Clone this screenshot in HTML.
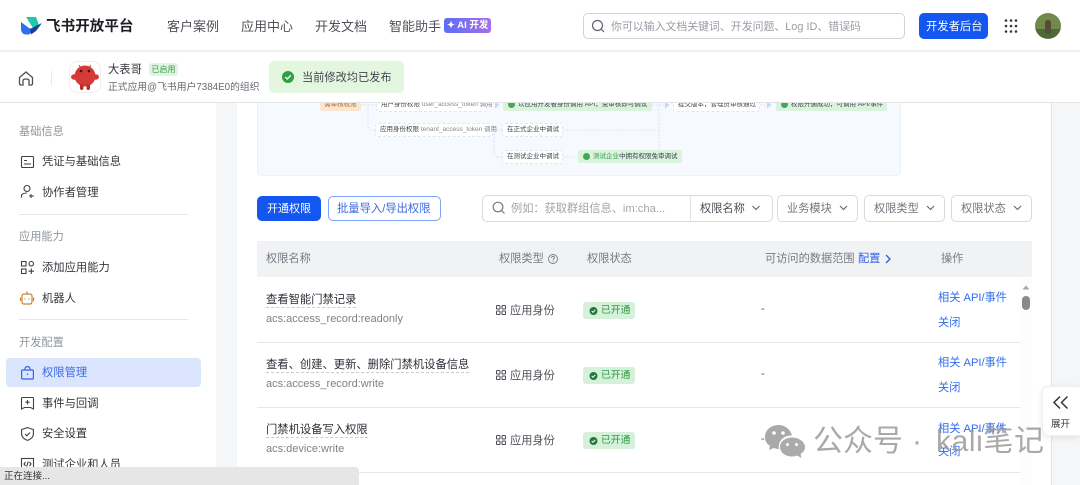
<!DOCTYPE html>
<html lang="zh"><head><meta charset="utf-8"><title>飞书开放平台</title>
<style>
html,body{margin:0;padding:0;width:1080px;height:485px;overflow:hidden;background:#f5f6f7}
body{position:relative;font-family:"Liberation Sans","Noto Sans CJK SC",sans-serif;color:#1f2329}
.a,.t{position:absolute}
.t{white-space:nowrap;line-height:20px}
svg{position:absolute;overflow:visible}
.nav{font-size:13px;color:#4e5258;top:17px}
.side{font-size:11.300px;color:#33373c;left:42px}
.sec{font-size:11.200px;color:#8f959e;left:19px}
.hr{position:absolute;left:19px;width:169px;height:1px;background:#e4e6e9}
.sel{position:absolute;top:195px;height:25px;border:1px solid #d8dadd;border-radius:5px;background:#fff;font-size:11.200px;color:#72777e;line-height:27px;padding-left:9px;box-sizing:content-box}
.rowline{position:absolute;left:257px;width:763px;height:1px;background:#e6e8ea}
.n{font-size:11.300px;color:#2b2f36;left:266px;border-bottom:1px dashed #c8ccd1;line-height:13px}
.k{font-size:11px;color:#7d8289;left:266px;line-height:16px}
.ty{font-size:11.200px;color:#4e5258;left:510px}
.badge{position:absolute;left:583px;width:52px;height:17px;background:#d5f1d9;border-radius:3px;font-size:9.800px;color:#2e9b46;line-height:17px;text-indent:18px}
.lk{font-size:11.200px;color:#2f6cf0;left:938px}
.d{font-size:11px;color:#555;left:761px}
.th{font-size:11.200px;color:#777b82;top:249px}
.box{position:absolute;background:#fff;border:1px dashed #dbe6f8;border-radius:3px;font-size:6.500px;color:#3e434a;line-height:12px;white-space:nowrap;padding:0 4px;box-sizing:border-box;height:14px}
.g{position:absolute;background:#d9f3dc;border-radius:2px;font-size:6.500px;color:#3e434a;line-height:13px;white-space:nowrap;height:13px;padding-left:15px;box-sizing:border-box}
.g i{position:absolute;left:5px;top:3px;width:7px;height:7px;border-radius:50%;background:#46a758}
</style></head><body>

<!-- header -->
<div class="a" style="left:0;top:0;width:1080px;height:50px;background:#fff"></div>
<div class="a" style="left:0;top:50px;width:1080px;height:2px;background:#f0f1f2"></div>
<svg style="left:21px;top:17px" width="22" height="18" viewBox="0 0 22 18">
<path d="M5 0H15L18 8L12 11Z" fill="#1fc7ab"/>
<path d="M0 5L8 11L13 12.500L8 17.500H5C2 17.500 0 15 0 12Z" fill="#2e6ff0"/>
<path d="M9 12L15 9L21 6L15 14L10 17.500Z" fill="#1a3e93"/>
</svg>
<div class="t" style="left:46px;top:17px;font-size:14.500px;font-weight:700;color:#1c1f23;letter-spacing:.1px">飞书开放平台</div>
<div class="t nav" style="left:167px">客户案例</div>
<div class="t nav" style="left:241px">应用中心</div>
<div class="t nav" style="left:315px">开发文档</div>
<div class="t nav" style="left:389px">智能助手</div>
<div class="a" style="left:444px;top:18px;width:47px;height:15px;border-radius:3px;background:linear-gradient(90deg,#5d6df5,#a56fe8)"></div>
<div class="t" style="left:447px;top:16px;font-size:9.500px;color:#fff;font-weight:700;line-height:19px">✦ AI 开发</div>

<div class="a" style="left:583px;top:13px;width:320px;height:24px;border:1px solid #cfd2d6;border-radius:5px;background:#fff"></div>
<svg style="left:591px;top:19px" width="14" height="14" viewBox="0 0 14 14" fill="none" stroke="#5f646b" stroke-width="1.200"><circle cx="6.500" cy="6.500" r="5"/><path d="M10 10L13 13"/></svg>
<div class="t" style="left:611px;top:17px;font-size:10.900px;color:#989ca3">你可以输入文档关键词、开发问题、Log ID、错误码</div>
<div class="a" style="left:919px;top:13px;width:69px;height:26px;background:#1456f0;border-radius:5px"></div>
<div class="t" style="left:926px;top:17px;font-size:11.300px;color:#fff">开发者后台</div>
<svg style="left:1004px;top:19px" width="14" height="14" fill="#33373c"><circle cx="2" cy="1.500" r="1.300"/><circle cx="7" cy="1.500" r="1.300"/><circle cx="12" cy="1.500" r="1.300"/><circle cx="2" cy="7" r="1.300"/><circle cx="7" cy="7" r="1.300"/><circle cx="12" cy="7" r="1.300"/><circle cx="2" cy="12.500" r="1.300"/><circle cx="7" cy="12.500" r="1.300"/><circle cx="12" cy="12.500" r="1.300"/></svg>
<svg style="left:1019px;top:13px" width="42" height="26" viewBox="0 0 42 26"><circle cx="29" cy="13" r="13" fill="#6f8a4b"/><path d="M16.500 16A13 13 0 0 0 41.500 16Z" fill="#4c6a35"/><rect x="26" y="7" width="6" height="14" rx="2.500" fill="#5a4a38"/></svg>

<!-- subheader -->
<div class="a" style="left:0;top:52px;width:1080px;height:50px;background:#fff"></div>
<div class="a" style="left:0;top:102px;width:1080px;height:1px;background:#e3e4e6"></div>
<svg style="left:18px;top:71px" width="16" height="15" viewBox="0 0 16 15" fill="none" stroke="#4b5057" stroke-width="1.300"><path d="M1.500 6.500L8 1L14.500 6.500V12.500C14.500 13.300 14 14 13 14H11V9.500C11 8.500 10 8 8 8C6 8 5 8.500 5 9.500V14H3C2 14 1.500 13.300 1.500 12.500Z"/></svg>
<div class="a" style="left:51px;top:71px;width:1px;height:14px;background:#e8e9eb"></div>
<div class="a" style="left:69px;top:61px;width:32px;height:32px;border:1px solid #eeeeee;border-radius:8px;box-sizing:border-box"></div>
<svg style="left:70px;top:61px" width="30" height="30" viewBox="0 0 30 30"><path d="M9 4L11 7M21 4L19 7" stroke="#c9403c" stroke-width="1"/><ellipse cx="4.500" cy="16" rx="3.500" ry="2.800" fill="#d63a37"/><ellipse cx="25.500" cy="16" rx="3.500" ry="2.800" fill="#d63a37"/><circle cx="15" cy="15" r="10.500" fill="#d63a36"/><rect x="10" y="23" width="3.500" height="6" rx="1.700" fill="#b92d2b"/><rect x="16.500" y="23" width="3.500" height="6" rx="1.700" fill="#b92d2b"/><circle cx="11" cy="10" r="1.300" fill="#3a1010"/><circle cx="19" cy="10" r="1.300" fill="#3a1010"/></svg>
<div class="t" style="left:108px;top:60px;font-size:11.300px;color:#33373c">大表哥</div>
<div class="a" style="left:149px;top:63px;width:29px;height:13px;background:#e1f4e2;border-radius:3px;font-size:8px;line-height:13px;color:#3b9c4e;text-align:center">已启用</div>
<div class="t" style="left:108px;top:78px;font-size:9.800px;color:#666b72">正式应用@飞书用户7384E0的组织</div>
<div class="a" style="left:269px;top:61px;width:135px;height:32px;background:#e3f7e0;border-radius:5px"></div>
<svg style="left:282px;top:71px" width="12" height="12" viewBox="0 0 12 12"><circle cx="6" cy="6" r="6" fill="#2ea043"/><path d="M3.300 6L5.300 8L8.800 4.300" stroke="#fff" stroke-width="1.300" fill="none"/></svg>
<div class="t" style="left:302px;top:68px;font-size:11.200px;color:#41464c">当前修改均已发布</div>

<!-- sidebar -->
<div class="a" style="left:0;top:103px;width:216px;height:382px;background:#fff"></div>
<div class="t sec" style="top:122px">基础信息</div>
<svg style="left:21px;top:156px" width="13" height="12" viewBox="0 0 13 12" fill="none" stroke="#3d4148" stroke-width="1.100"><rect x=".5" y=".5" width="12" height="11" rx="1"/><path d="M3 4.500H6M3 8H10"/></svg>
<div class="t side" style="top:152px">凭证与基础信息</div>
<svg style="left:21px;top:185px" width="14" height="13" viewBox="0 0 14 13" fill="none" stroke="#3d4148" stroke-width="1.100"><circle cx="6" cy="3.500" r="3"/><path d="M.5 12.500V11C.5 9 3 8 6 8M10 9V13M8 11H13"/></svg>
<div class="t side" style="top:183px">协作者管理</div>
<div class="hr" style="top:214px"></div>
<div class="t sec" style="top:227px">应用能力</div>
<svg style="left:21px;top:261px" width="13" height="13" viewBox="0 0 13 13" fill="none" stroke="#3d4148" stroke-width="1.100"><rect x=".5" y=".5" width="4.500" height="4.500"/><rect x="8" y=".5" width="4.500" height="4.500" rx="2.200"/><rect x=".5" y="8" width="4.500" height="4.500"/><path d="M10.300 7.500V13M7.500 10.200H13"/></svg>
<div class="t side" style="top:258px">添加应用能力</div>
<svg style="left:20px;top:291px" width="14" height="14" viewBox="0 0 14 14" fill="none" stroke="#c98432" stroke-width="1.200"><rect x="2" y="3" width="10" height="10" rx="2"/><path d="M7 0.500V3M0.500 6.500V10M13.500 6.500V10"/><path d="M5 7.500V8.500M9 7.500V8.500"/></svg>
<div class="t side" style="top:289px">机器人</div>
<div class="hr" style="top:319px"></div>
<div class="t sec" style="top:333px">开发配置</div>
<div class="a" style="left:6px;top:358px;width:195px;height:29px;background:#dbe5fd;border-radius:4px"></div>
<svg style="left:21px;top:366px" width="13" height="14" viewBox="0 0 13 14" fill="none" stroke="#2f63e8" stroke-width="1.200"><rect x=".6" y="4" width="11.800" height="9" rx="1"/><path d="M4 4V2.500C4 1.500 5 .6 6.500 .6S9 1.500 9 2.500V4"/><path d="M6.500 7.500V9"/></svg>
<div class="t side" style="top:363px;color:#3c6be6">权限管理</div>
<svg style="left:21px;top:397px" width="13" height="13" viewBox="0 0 13 13" fill="none" stroke="#3d4148" stroke-width="1.100"><path d="M.5 1.500C.5 1 1 .5 1.500 .5H11.500C12 .5 12.500 1 12.500 1.500V12L9.500 10.500H3.500L.5 12Z"/><path d="M6.500 3V7.500M4.300 5.200H8.700"/></svg>
<div class="t side" style="top:394px">事件与回调</div>
<svg style="left:21px;top:427px" width="13" height="14" viewBox="0 0 13 14" fill="none" stroke="#3d4148" stroke-width="1.100"><path d="M6.500 .6L12.400 2.500V7C12.400 10 9.500 12.500 6.500 13.400C3.500 12.500 .6 10 .6 7V2.500Z"/><path d="M4 7L5.800 8.800L9 5.500"/></svg>
<div class="t side" style="top:424px">安全设置</div>
<svg style="left:21px;top:458px" width="13" height="12" viewBox="0 0 13 12" fill="none" stroke="#3d4148" stroke-width="1.100"><rect x=".5" y=".5" width="12" height="11"/><path d="M4.500 4L3 6L4.500 8M8.500 4L10 6L8.500 8M7.300 3.500L5.700 8.500"/></svg>
<div class="t side" style="top:455px">测试企业和人员</div>

<!-- main -->
<div class="a" style="left:237px;top:103px;width:814px;height:382px;background:#fff"></div>
<div class="a" style="left:1051px;top:103px;width:1px;height:382px;background:#e4e5e7"></div>

<!-- flow diagram (clipped under the subheader) -->
<div class="a" style="left:0;top:103px;width:1080px;height:74px;overflow:hidden">
<div class="a" style="left:0;top:-103px;width:1080px;height:300px">
<div class="a" style="left:257px;top:95px;width:644px;height:81px;background:#f6faff;border:1px solid #ecf1f8;border-radius:5px;box-sizing:border-box"></div>
<svg style="left:0;top:0" width="1080" height="200" fill="none" stroke="#cfdcf5" stroke-width=".8" stroke-dasharray="2 1.500">
<path d="M361 105H376M368 105V127C368 129 370 130 372 130H376"/>
<path d="M493 130H502M494 130V155C494 156.500 495 157 497 157H502"/>
<path d="M563 130H659M563 157H578M659 95V150M652 105H665M760 105H767"/>
</svg>
<svg style="left:0;top:0" width="1080" height="200" fill="#c5d6f8"><path d="M495 101.500L499.500 105L495 108.500ZM665 101.500L669.500 105L665 108.500ZM767 101.500L771.500 105L767 108.500Z"/></svg>
<div class="a" style="left:320px;top:97px;width:41px;height:14px;background:#fde6cf;border-radius:2px;font-size:6.500px;line-height:15px;color:#a86a22;text-align:center">需审核权限</div>
<div class="box" style="left:376px;top:98px;width:111px">用户身份权限 <span style="color:#888">user_access_token 调用</span></div>
<div class="g" style="left:503px;top:98px;width:149px">以应用开发者身份调用 API，免审核即可调试<i></i></div>
<div class="box" style="left:673px;top:98px;width:87px">提交版本，管理员审核通过</div>
<div class="g" style="left:776px;top:98px;width:111px">权限开通成功，可调用 API/事件<i></i></div>
<div class="box" style="left:375px;top:123px;width:118px">应用身份权限 <span style="color:#888">tenant_access_token 调用</span></div>
<div class="box" style="left:502px;top:123px;width:61px">在正式企业中调试</div>
<div class="box" style="left:502px;top:150px;width:61px">在测试企业中调试</div>
<div class="g" style="left:578px;top:150px;width:104px"><span style="color:#3d9a4f">测试企业</span>中拥有权限免审调试<i></i></div>
</div></div>

<!-- toolbar -->
<div class="a" style="left:257px;top:196px;width:64px;height:25px;background:#1456f0;border-radius:5px"></div>
<div class="t" style="left:267px;top:199px;font-size:11px;color:#fff">开通权限</div>
<div class="a" style="left:328px;top:196px;width:113px;height:25px;border:1px solid #7aa3f5;border-radius:5px;box-sizing:border-box;background:#fff"></div>
<div class="t" style="left:337px;top:199px;font-size:11.300px;color:#3c6be6">批量导入/导出权限</div>

<div class="a" style="left:482px;top:195px;width:289px;height:25px;border:1px solid #d8dadd;border-radius:5px;background:#fff"></div>
<div class="a" style="left:690px;top:196px;width:1px;height:25px;background:#e2e4e6"></div>
<svg style="left:492px;top:201px" width="14" height="14" viewBox="0 0 14 14" fill="none" stroke="#767b82" stroke-width="1.200"><circle cx="6" cy="6" r="4.800"/><path d="M9.500 9.500L12.500 12.500"/></svg>
<div class="t" style="left:511px;top:199px;font-size:11.200px;color:#a0a4aa">例如：获取群组信息、im:cha...</div>
<div class="t" style="left:700px;top:199px;font-size:11.200px;color:#4b5057">权限名称</div>
<div class="sel" style="left:777px;width:70px">业务模块</div>
<div class="sel" style="left:864px;width:70px">权限类型</div>
<div class="sel" style="left:951px;width:70px">权限状态</div>
<svg style="left:0;top:0" width="1080" height="485" fill="none" stroke="#5f646b" stroke-width="1.100"><path d="M752.500 206L756 209.500L759.500 206M840 206L843.500 209.500L847 206M927 206L930.500 209.500L934 206M1014 206L1017.500 209.500L1021 206"/></svg>

<!-- table -->
<div class="a" style="left:257px;top:241px;width:775px;height:36px;background:#f1f2f4"></div>
<div class="t th" style="left:266px">权限名称</div>
<div class="t th" style="left:499px">权限类型</div>
<svg style="left:548px;top:254px" width="10" height="10" fill="none" stroke="#777b82" stroke-width=".9"><circle cx="5" cy="5" r="4.500"/><path d="M3.500 4C3.500 2 6.500 2 6.500 4C6.500 5 5 5 5 6.300M5 7.300V8"/></svg>
<div class="t th" style="left:587px">权限状态</div>
<div class="t th" style="left:765px">可访问的数据范围</div>
<div class="t th" style="left:858px;color:#2f63e8">配置</div>
<svg style="left:885px;top:254px" width="6" height="10" fill="none" stroke="#2f63e8" stroke-width="1.400"><path d="M1 1L5 5L1 9"/></svg>
<div class="t th" style="left:941px">操作</div>

<div class="t n" style="top:294px">查看智能门禁记录</div>
<div class="t k" style="top:311px">acs:access_record:readonly</div>
<div class="t n" style="top:359px">查看、创建、更新、删除门禁机设备信息</div>
<div class="t k" style="top:376px">acs:access_record:write</div>
<div class="t n" style="top:424px">门禁机设备写入权限</div>
<div class="t k" style="top:441px">acs:device:write</div>

<div class="t ty" style="top:301px">应用身份</div>
<div class="t ty" style="top:366px">应用身份</div>
<div class="t ty" style="top:431px">应用身份</div>
<svg style="left:496px;top:305px" width="10" height="140" fill="none" stroke="#4b5057" stroke-width="1"><g><rect x=".5" y=".5" width="3.500" height="3.500" rx=".8"/><rect x="6" y=".5" width="3.500" height="3.500" rx=".8"/><rect x=".5" y="6" width="3.500" height="3.500" rx=".8"/><rect x="6" y="6" width="3.500" height="3.500" rx=".8"/></g><g transform="translate(0 65)"><rect x=".5" y=".5" width="3.500" height="3.500" rx=".8"/><rect x="6" y=".5" width="3.500" height="3.500" rx=".8"/><rect x=".5" y="6" width="3.500" height="3.500" rx=".8"/><rect x="6" y="6" width="3.500" height="3.500" rx=".8"/></g><g transform="translate(0 130)"><rect x=".5" y=".5" width="3.500" height="3.500" rx=".8"/><rect x="6" y=".5" width="3.500" height="3.500" rx=".8"/><rect x=".5" y="6" width="3.500" height="3.500" rx=".8"/><rect x="6" y="6" width="3.500" height="3.500" rx=".8"/></g></svg>

<div class="badge" style="top:302px">已开通</div>
<div class="badge" style="top:367px">已开通</div>
<div class="badge" style="top:432px">已开通</div>
<svg style="left:589px;top:306px" width="9" height="140"><g><circle cx="4.500" cy="5" r="4" fill="#237a38"/><path d="M2.700 5L4 6.300L6.300 3.800" stroke="#fff" fill="none"/></g><g transform="translate(0 65)"><circle cx="4.500" cy="5" r="4" fill="#237a38"/><path d="M2.700 5L4 6.300L6.300 3.800" stroke="#fff" fill="none"/></g><g transform="translate(0 130)"><circle cx="4.500" cy="5" r="4" fill="#237a38"/><path d="M2.700 5L4 6.300L6.300 3.800" stroke="#fff" fill="none"/></g></svg>

<div class="t d" style="top:299px">-</div>
<div class="t d" style="top:364px">-</div>
<div class="t d" style="top:429px">-</div>

<div class="t lk" style="top:288px">相关 API/事件</div>
<div class="t lk" style="top:313px">关闭</div>
<div class="t lk" style="top:353px">相关 API/事件</div>
<div class="t lk" style="top:378px">关闭</div>
<div class="t lk" style="top:419px">相关 API/事件</div>
<div class="t lk" style="top:442px">关闭</div>

<div class="rowline" style="top:342px"></div>
<div class="rowline" style="top:407px"></div>
<div class="rowline" style="top:472px"></div>

<!-- scrollbar -->
<div class="a" style="left:1020px;top:277px;width:12px;height:208px;background:#fdfdfd"></div>
<svg style="left:1022px;top:285px" width="8" height="5"><path d="M4 0.500L7.500 4.500H.5Z" fill="#a8a8a8"/></svg>
<div class="a" style="left:1022px;top:296px;width:8px;height:14px;background:#8a8a8a;border-radius:4px"></div>

<!-- watermark -->
<svg style="left:764px;top:424px" width="42" height="34" viewBox="0 0 42 34"><path d="M15 1C7 1 1 6 1 13C1 17 3 20 6 22L5 26L10 24C12 24.700 13.500 25 15 25C15 25 14.500 23 15 21C16 14 23 11 28 11.500C26.500 5.500 21 1 15 1Z" fill="#a9a9a9"/><path d="M28 13.500C21 13.500 16 18 16 23S21 32.500 28 32.500C30 32.500 31.500 32 33 31.500L37.500 34L36.500 30C39.500 28 41 26 41 23C41 18 35 13.500 28 13.500Z" fill="#ababab"/><circle cx="10" cy="9" r="1.800" fill="#fff"/><circle cx="19" cy="9" r="1.800" fill="#fff"/><circle cx="23.500" cy="20.500" r="1.500" fill="#fff"/><circle cx="32.500" cy="20.500" r="1.500" fill="#fff"/></svg>
<div class="t" style="left:813px;top:425px;font-size:30px;line-height:34px;color:rgba(150,150,150,.82)">公众号</div>
<div class="t" style="left:912px;top:425px;font-size:30px;line-height:34px;color:rgba(150,150,150,.82)">·</div>
<div class="t" style="left:936px;top:425px;font-size:30px;line-height:34px;color:rgba(150,150,150,.82);letter-spacing:.6px">kali笔记</div>

<!-- expand -->
<div class="a" style="left:1042px;top:386px;width:38px;height:50px;background:#fff;border:1px solid #eeeff1;border-right:0;border-radius:6px 0 0 6px;box-sizing:border-box;box-shadow:0 2px 8px rgba(0,0,0,.08)"></div>
<svg style="left:1053px;top:396px" width="16" height="13" fill="none" stroke="#33373c" stroke-width="1.500"><path d="M7 .5L1 6.500L7 12.500M14.500 .5L8.500 6.500L14.500 12.500"/></svg>
<div class="t" style="left:1051px;top:415px;font-size:9.500px;color:#33373c">展开</div>

<!-- status -->
<div class="a" style="left:0;top:467px;width:359px;height:18px;background:#e6e6e6;border-radius:0 4px 0 0"></div>
<div class="t" style="left:4px;top:468px;font-size:9.500px;line-height:18px;color:#333">正在连接...</div>
</body></html>
